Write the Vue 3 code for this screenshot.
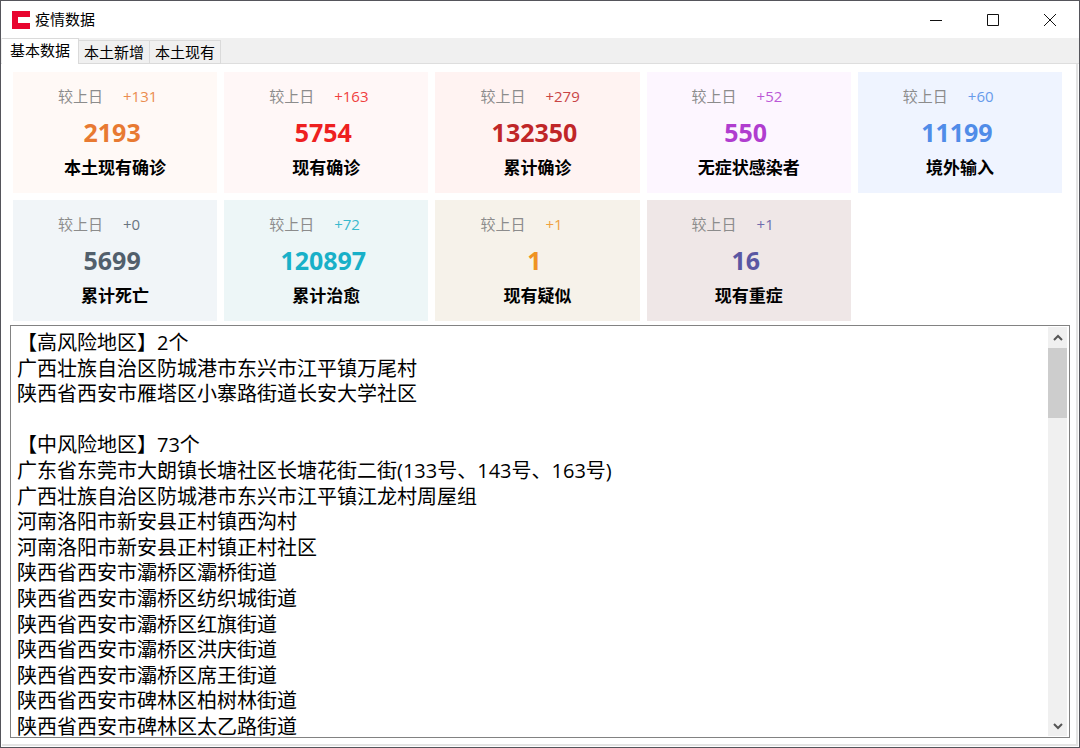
<script setup>
import { ref } from 'vue'

const tabs = ['基本数据', '本土新增', '本土现有']
const active = ref(0)

const cards = [
  { key: 'local', delta: '+131', value: '2193', label: '本土现有确诊' },
  { key: 'current', delta: '+163', value: '5754', label: '现有确诊' },
  { key: 'total', delta: '+279', value: '132350', label: '累计确诊' },
  { key: 'silent', delta: '+52', value: '550', label: '无症状感染者' },
  { key: 'abroad', delta: '+60', value: '11199', label: '境外输入' },
  { key: 'dead', delta: '+0', value: '5699', label: '累计死亡' },
  { key: 'cured', delta: '+72', value: '120897', label: '累计治愈' },
  { key: 'suspect', delta: '+1', value: '1', label: '现有疑似' },
  { key: 'severe', delta: '+1', value: '16', label: '现有重症' },
]

const lines = [
  '【高风险地区】2个',
  '广西壮族自治区防城港市东兴市江平镇万尾村',
  '陕西省西安市雁塔区小寨路街道长安大学社区',
  '',
  '【中风险地区】73个',
  '广东省东莞市大朗镇长塘社区长塘花街二街(133号、143号、163号)',
  '广西壮族自治区防城港市东兴市江平镇江龙村周屋组',
  '河南洛阳市新安县正村镇西沟村',
  '河南洛阳市新安县正村镇正村社区',
  '陕西省西安市灞桥区灞桥街道',
  '陕西省西安市灞桥区纺织城街道',
  '陕西省西安市灞桥区红旗街道',
  '陕西省西安市灞桥区洪庆街道',
  '陕西省西安市灞桥区席王街道',
  '陕西省西安市碑林区柏树林街道',
  '陕西省西安市碑林区太乙路街道',
]
</script>

<template>
  <div class="window">
    <header class="titlebar">
      <svg class="logo" viewBox="0 0 18 18" aria-hidden="true">
        <path d="M0 0H18V6H6V12H18V18H0Z" />
      </svg>
      <h1 class="title">疫情数据</h1>
      <button class="control" type="button" aria-label="最小化">
        <svg viewBox="0 0 14 14"><path d="M1 7.5H13" /></svg>
      </button>
      <button class="control" type="button" aria-label="最大化">
        <svg viewBox="0 0 14 14"><path d="M1.5 1.5H12.5V12.5H1.5Z" /></svg>
      </button>
      <button class="control" type="button" aria-label="关闭">
        <svg viewBox="0 0 14 14"><path d="M1 1L13 13M13 1L1 13" /></svg>
      </button>
    </header>

    <nav class="tabs" role="tablist">
      <button
        v-for="(tab, i) in tabs"
        :key="tab"
        class="tab"
        :class="{ active: active === i }"
        type="button"
        role="tab"
        :aria-selected="active === i"
        @click="active = i"
      >{{ tab }}</button>
    </nav>

    <main class="pane">
      <section class="cards">
        <article v-for="card in cards" :key="card.key" class="card" :class="card.key">
          <p class="compare"><span>较上日</span><span class="delta">{{ card.delta }}</span></p>
          <p class="value">{{ card.value }}</p>
          <h2 class="label">{{ card.label }}</h2>
        </article>
      </section>

      <section class="report">
        <div class="lines">
          <p v-for="(line, i) in lines" :key="i" class="line">{{ line }}</p>
        </div>
        <div class="scrollbar">
          <button class="arrow" type="button" aria-label="向上滚动">
            <svg viewBox="0 0 12 8"><path d="M2 6L6 2L10 6" /></svg>
          </button>
          <div class="track"><div class="thumb"></div></div>
          <button class="arrow" type="button" aria-label="向下滚动">
            <svg viewBox="0 0 12 8"><path d="M2 2L6 6L10 2" /></svg>
          </button>
        </div>
      </section>
    </main>
  </div>
</template>

<style>
body {
  margin: 0;
}
</style>

<style scoped>
.window {
  box-sizing: border-box;
  display: flex;
  flex-direction: column;
  min-height: 100vh;
  border: 1px solid #55555b;
  background: #fff;
  color: #000;
  font-family: "Open Sans", "Noto Sans CJK SC", sans-serif;
}
h1, h2, p {
  margin: 0;
  font-weight: 400;
}
button {
  padding: 0;
  border: 0;
  background: none;
  color: inherit;
  font-family: inherit;
}
.titlebar {
  display: flex;
  align-items: center;
  height: 37px;
  flex: none;
  padding: 0 1px 0 11px;
}
.logo {
  width: 18px;
  height: 18px;
  fill: #e8052f;
}
.title {
  margin-left: 5px;
  margin-right: auto;
  padding-bottom: 2px;
  font-size: 15px;
  line-height: 20px;
}
.control {
  display: grid;
  place-items: center;
  width: 57px;
  height: 37px;
}
.control svg {
  width: 14px;
  height: 14px;
  fill: none;
  stroke: #111;
  stroke-width: 1;
}
.tabs {
  display: flex;
  align-items: flex-end;
  flex: none;
  height: 26px;
  padding-left: 1px;
  background: #f0f0f0;
  box-shadow: inset 0 -1px #dedede;
}
.tab {
  box-sizing: border-box;
  height: 24px;
  padding: 0 5px;
  border: 1px solid #dadada;
  border-left: 0;
  font-size: 15px;
  line-height: 22px;
}
.tab.active {
  height: 26px;
  padding: 0 8px 3px;
  border-bottom: 0;
  background: #fff;
}
.pane {
  display: flex;
  flex-direction: column;
  flex: 1;
  margin: 0 1px 1px;
  padding: 8px 6px 6px 8px;
  border-right: 2px solid #e4e4e4;
  border-bottom: 2px solid #e4e4e4;
}
.cards {
  display: grid;
  grid-template-columns: repeat(5, 1fr);
  gap: 7px;
  margin: 0 8px 4px 3px;
}
.card {
  box-sizing: border-box;
  height: 121px;
  padding-top: 14px;
  text-align: center;
}
.compare {
  display: flex;
  gap: 20px;
  padding-left: 45px;
  color: #8c8c8c;
  font-size: 15px;
  line-height: 20px;
}
.delta {
  color: var(--tone);
  opacity: 0.85;
}
.value {
  margin-top: 9px;
  padding-right: 6px;
  color: var(--tone);
  font-size: 25px;
  font-weight: 700;
  line-height: 34px;
}
.label {
  margin-top: 7px;
  font-size: 17px;
  font-weight: 700;
  line-height: 24px;
}
.local { background: #fff9f6; --tone: #e87a32; }
.current { background: #fff7f7; --tone: #ee2020; }
.total { background: #fff3f2; --tone: #c02628; }
.silent { background: #fdf6ff; --tone: #b03dcf; }
.abroad { background: #eff4ff; --tone: #508ce8; }
.dead { background: #f1f5f8; --tone: #525f6c; }
.cured { background: #edf6f7; --tone: #19b0c8; }
.suspect { background: #f6f2ea; --tone: #ef9323; }
.severe { background: #efe7e7; --tone: #5a57a3; }
.report {
  display: flex;
  flex: 1;
  border: 1px solid #828282;
}
.lines {
  display: flex;
  flex-direction: column;
  justify-content: space-between;
  flex: 1;
  min-width: 0;
  padding: 7px 6px 0;
}
.line {
  min-height: 20px;
  font-size: 20px;
  line-height: 20px;
}
.scrollbar {
  display: flex;
  flex-direction: column;
  width: 19px;
  margin: 1px 2px 1px 0;
  background: #f0f0f0;
}
.arrow {
  display: grid;
  place-items: center;
  height: 21px;
}
.arrow svg {
  width: 12px;
  height: 8px;
  fill: none;
  stroke: #555;
  stroke-width: 2;
}
.track {
  display: grid;
  grid-template-rows: 19fr 81fr;
  flex: 1;
}
.thumb {
  background: #cdcdcd;
}
</style>
